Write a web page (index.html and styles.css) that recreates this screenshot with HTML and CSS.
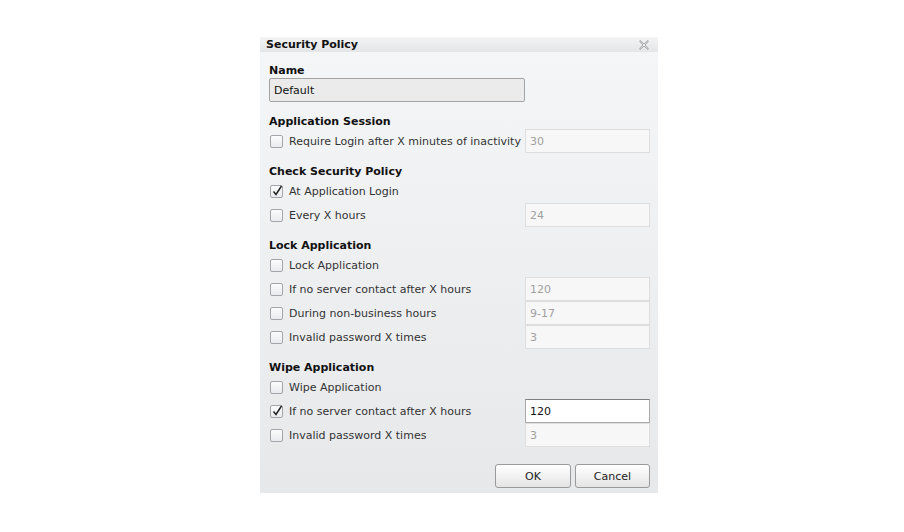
FILE: index.html
```html
<!DOCTYPE html>
<html lang="en">
<head>
<meta charset="utf-8">
<title>Security Policy</title>
<link rel="stylesheet" href="styles.css">
</head>
<body>
<div class="stage">
  <div class="dialog">
    <div class="titlebar">
      <span class="title">Security Policy</span>
      <svg class="close" width="10" height="10" viewBox="0 0 10 10" aria-hidden="true">
        <path d="M1 0.5 L5 4 L9 0.5 L9.5 1 L6 5 L9.5 9 L9 9.5 L5 6 L1 9.5 L0.5 9 L4 5 L0.5 1 Z" fill="#fafafa" stroke="#a0a0a0" stroke-width="1" stroke-linejoin="round"/>
      </svg>
    </div>
    <div class="content">
      <section class="section first">
        <h3 class="heading">Name</h3>
        <input class="name-input" type="text" value="Default" readonly>
      </section>

      <section class="section">
        <h3 class="heading">Application Session</h3>
        <div class="row">
          <label class="check"><span class="box"></span>Require Login after X minutes of inactivity</label>
          <input class="field" type="text" value="30" readonly>
        </div>
      </section>

      <section class="section">
        <h3 class="heading">Check Security Policy</h3>
        <div class="row">
          <label class="check"><span class="box checked"><svg width="12" height="12" viewBox="0 0 12 12"><path d="M2.5 6.5 L5 9.5 L10.5 1" fill="none" stroke="#222" stroke-width="1.5"/></svg></span>At Application Login</label>
        </div>
        <div class="row">
          <label class="check"><span class="box"></span>Every X hours</label>
          <input class="field" type="text" value="24" readonly>
        </div>
      </section>

      <section class="section">
        <h3 class="heading">Lock Application</h3>
        <div class="row">
          <label class="check"><span class="box"></span>Lock Application</label>
        </div>
        <div class="row">
          <label class="check"><span class="box"></span>If no server contact after X hours</label>
          <input class="field" type="text" value="120" readonly>
        </div>
        <div class="row">
          <label class="check"><span class="box"></span>During non-business hours</label>
          <input class="field" type="text" value="9-17" readonly>
        </div>
        <div class="row">
          <label class="check"><span class="box"></span>Invalid password X times</label>
          <input class="field" type="text" value="3" readonly>
        </div>
      </section>

      <section class="section">
        <h3 class="heading">Wipe Application</h3>
        <div class="row">
          <label class="check"><span class="box"></span>Wipe Application</label>
        </div>
        <div class="row">
          <label class="check"><span class="box checked"><svg width="12" height="12" viewBox="0 0 12 12"><path d="M2.5 6.5 L5 9.5 L10.5 1" fill="none" stroke="#222" stroke-width="1.5"/></svg></span>If no server contact after X hours</label>
          <input class="field active" type="text" value="120">
        </div>
        <div class="row">
          <label class="check"><span class="box"></span>Invalid password X times</label>
          <input class="field" type="text" value="3" readonly>
        </div>
      </section>

      <div class="actions">
        <button class="btn ok" type="button">OK</button>
        <button class="btn cancel" type="button">Cancel</button>
      </div>
    </div>
  </div>
</div>
</body>
</html>
```

FILE: styles.css
```css
html, body {
  margin: 0;
  padding: 0;
  background: #ffffff;
}

body {
  font-family: "DejaVu Sans", sans-serif;
  font-size: 11px;
  color: #222;
}

.stage {
  display: flex;
  padding: 37px 0 0 260px;
}

.dialog {
  width: 398px;
  height: 456px;
  display: flex;
  flex-direction: column;
  background: linear-gradient(#f5f6f7, #e6e8ea);
}

.titlebar {
  height: 15px;
  display: flex;
  align-items: center;
  justify-content: space-between;
  padding: 0 9px 0 6px;
  background: linear-gradient(#f4f4f5, #e3e5e7);
}

.title {
  font-weight: bold;
  font-size: 11px;
  color: #111;
  line-height: 15px;
}

.close {
  display: block;
}

.content {
  flex: 1;
  display: flex;
  flex-direction: column;
  padding: 10px 8px 5px 9px;
}

.section {
  display: flex;
  flex-direction: column;
  margin-top: 10px;
}

.section.first {
  margin-top: 0;
}

.heading {
  margin: 0;
  padding-top: 1px;
  font-size: 11px;
  font-weight: bold;
  line-height: 15px;
  color: #111;
}

.name-input {
  width: 256px;
  height: 24px;
  box-sizing: border-box;
  margin: 0 0 1px 0;
  padding: 0 4px;
  border: 1px solid #a3a3a3;
  border-radius: 2px;
  background: #ebebeb;
  font: inherit;
  color: #111;
  outline: none;
}

.row {
  height: 24px;
  display: grid;
  grid-template-columns: 1fr 125px;
  align-items: center;
}

.check {
  grid-column: 1;
  display: flex;
  align-items: center;
  gap: 6px;
  padding-left: 1px;
  color: #333;
  white-space: nowrap;
}

.box {
  width: 13px;
  height: 13px;
  box-sizing: border-box;
  border: 1px solid #a2a6ab;
  border-radius: 2px;
  background: linear-gradient(#fafbfc, #e9ebee);
  display: flex;
  align-items: center;
  justify-content: center;
  flex-shrink: 0;
  overflow: visible;
}

.box svg {
  display: block;
  flex-shrink: 0;
  margin-top: -1px;
}

.field {
  grid-column: 2;
  width: 125px;
  height: 24px;
  box-sizing: border-box;
  margin: 0;
  padding: 0 4px;
  border: 1px solid #dedede;
  background: #f7f7f7;
  font: inherit;
  color: #a0a0a0;
  outline: none;
}

.field.active {
  background: #ffffff;
  border-color: #a9a9a9;
  border-top-color: #7e7e7e;
  color: #111;
}

.actions {
  display: flex;
  justify-content: flex-end;
  gap: 4px;
  margin-top: auto;
}

.btn {
  height: 24px;
  margin: 0;
  padding: 0;
  border: 1px solid #9a9a9a;
  border-radius: 3px;
  background: linear-gradient(#ffffff, #e4e4e4);
  font: inherit;
  color: #222;
}

.btn.ok {
  width: 76px;
}

.btn.cancel {
  width: 75px;
}
```
